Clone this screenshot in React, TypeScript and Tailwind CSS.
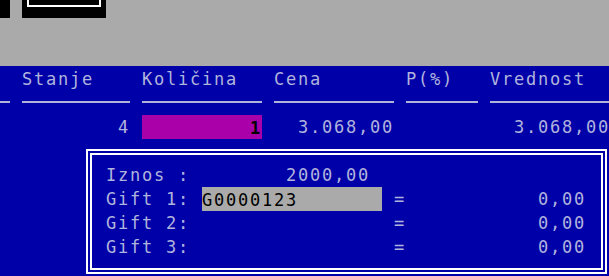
const cell = "h-[24px] pt-[3px] leading-[21px] whitespace-pre";

export default function App() {
  return (
    <div className="w-[609px] h-[276px] overflow-hidden bg-[#0000a8] text-[#b0b4dc] font-['DejaVu_Sans_Mono',monospace] text-[17px] tracking-[1.77px]">
      {/* Top gray area with the black window tabs */}
      <div className="h-[66px] bg-[#aaaaaa]">
        <div className="flex gap-[12px]">
          <div className="w-[10px] h-[18px] bg-black" />
          <div className="w-[84px] h-[18px] bg-black">
            <div className="ml-[5px] w-[74px] h-[7px] border-x-2 border-b-2 border-white" />
          </div>
        </div>
      </div>

      {/* Column headers */}
      <div className="ml-[-2px] grid grid-cols-[repeat(52,12px)] h-[24px]">
        <div className={`col-start-3 col-span-6 ${cell}`}>Stanje</div>
        <div className={`col-start-13 col-span-8 ${cell}`}>Količina</div>
        <div className={`col-start-24 col-span-4 ${cell}`}>Cena</div>
        <div className={`col-start-35 col-span-4 ${cell}`}>P(%)</div>
        <div className={`col-start-42 col-span-8 ${cell}`}>Vrednost</div>
      </div>

      {/* Underlines */}
      <div className="ml-[-2px] grid grid-cols-[repeat(52,12px)] h-[24px]">
        <div className="col-start-1 col-span-1 mt-[11px] h-[2px] bg-[#b0b4dc]" />
        <div className="col-start-3 col-span-9 mt-[11px] h-[2px] bg-[#b0b4dc]" />
        <div className="col-start-13 col-span-10 mt-[11px] h-[2px] bg-[#b0b4dc]" />
        <div className="col-start-24 col-span-10 mt-[11px] h-[2px] bg-[#b0b4dc]" />
        <div className="col-start-35 col-span-6 mt-[11px] h-[2px] bg-[#b0b4dc]" />
        <div className="col-start-42 col-span-11 mt-[11px] h-[2px] bg-[#b0b4dc]" />
      </div>

      {/* Item row */}
      <div className="ml-[-2px] grid grid-cols-[repeat(52,12px)] h-[24px]">
        <div className={`col-start-11 col-span-1 row-start-1 ${cell}`}>4</div>
        <div className="col-start-13 col-span-10 row-start-1 mt-[1px] h-[24px] bg-[#aa00aa]" />
        <div className={`col-start-22 col-span-1 row-start-1 mt-[1px] font-bold text-black ${cell}`}>1</div>
        <div className={`col-start-26 col-span-8 row-start-1 ${cell}`}>3.068,00</div>
        <div className={`col-start-44 col-span-8 row-start-1 ${cell}`}>3.068,00</div>
      </div>

      {/* Gift card dialog */}
      <div className="mt-[11px] ml-[86px] w-[521px] h-[125px] border-[6px] border-double border-white pt-[7px] pl-[2px]">
        <div className="grid grid-cols-[repeat(42,12px)] h-[24px]">
          <div className={`col-start-2 col-span-7 ${cell}`}>Iznos :</div>
          <div className={`col-start-17 col-span-7 ${cell}`}>2000,00</div>
        </div>
        <div className="grid grid-cols-[repeat(42,12px)] h-[24px]">
          <div className={`col-start-2 col-span-7 ${cell}`}>Gift 1:</div>
          <div className={`col-start-10 col-span-15 mt-[1px] bg-[#aaaaaa] text-black ${cell}`}>G0000123</div>
          <div className={`col-start-26 col-span-1 ${cell}`}>=</div>
          <div className={`col-start-38 col-span-4 ${cell}`}>0,00</div>
        </div>
        <div className="grid grid-cols-[repeat(42,12px)] h-[24px]">
          <div className={`col-start-2 col-span-7 ${cell}`}>Gift 2:</div>
          <div className={`col-start-26 col-span-1 ${cell}`}>=</div>
          <div className={`col-start-38 col-span-4 ${cell}`}>0,00</div>
        </div>
        <div className="grid grid-cols-[repeat(42,12px)] h-[24px]">
          <div className={`col-start-2 col-span-7 ${cell}`}>Gift 3:</div>
          <div className={`col-start-26 col-span-1 ${cell}`}>=</div>
          <div className={`col-start-38 col-span-4 ${cell}`}>0,00</div>
        </div>
      </div>
    </div>
  );
}
